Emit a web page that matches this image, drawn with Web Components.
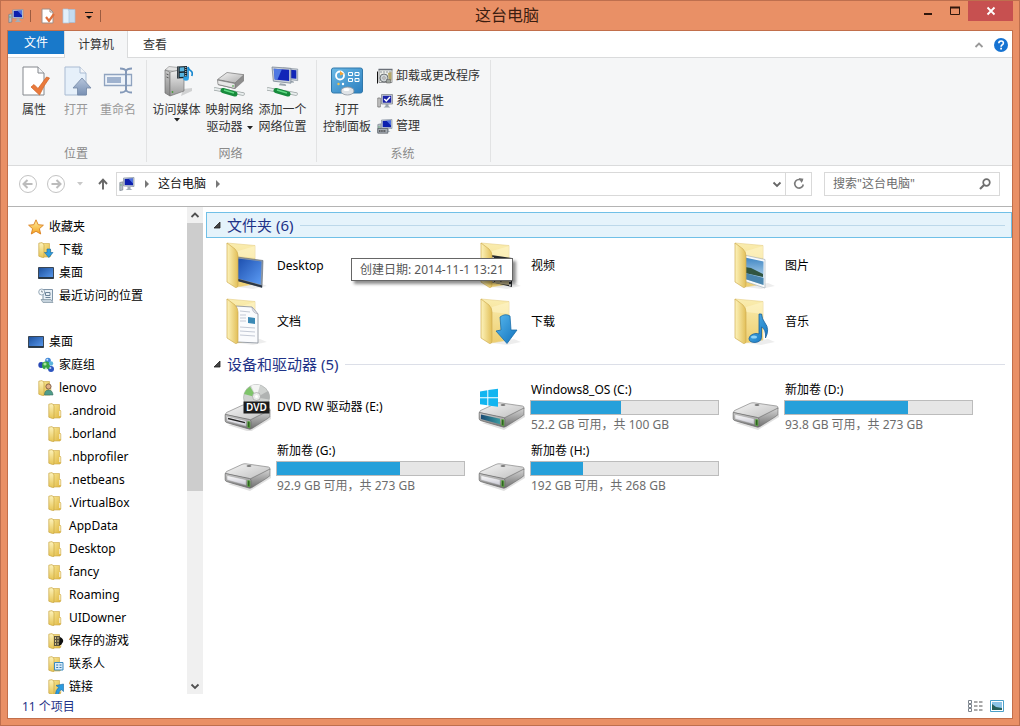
<!DOCTYPE html>
<html lang="zh-CN">
<head>
<meta charset="utf-8">
<title>这台电脑</title>
<style>
  html, body { height: 100%; margin: 0; }
  body {
    font: 12px/17px "Noto Sans", "Noto Sans CJK SC", sans-serif;
    color: #000; background: #e99066;
  }
</style>
</head>
<body>
<explorer-window>
  <title-bar slot="title">这台电脑</title-bar>
  <ribbon-tabs slot="tabs"></ribbon-tabs>
  <ribbon-bar slot="ribbon">
    <ribbon-group label="位置" style="--w:139px;--pad:5px">
      <ribbon-button icon="props" style="--w:42px">属性</ribbon-button>
      <ribbon-button icon="open" disabled style="--w:42px">打开</ribbon-button>
      <ribbon-button icon="rename" disabled style="--w:42px">重命名</ribbon-button>
    </ribbon-group>
    <ribbon-group label="网络" style="--w:170px;--pad:3px">
      <ribbon-button icon="media" drop="below" style="--w:53px">访问媒体</ribbon-button>
      <ribbon-button icon="mapdrive" drop="inline" style="--w:53px">映射网络<br>驱动器</ribbon-button>
      <ribbon-button icon="netplace" style="--w:53px">添加一个<br>网络位置</ribbon-button>
    </ribbon-group>
    <ribbon-group label="系统" style="--w:174px;--pad:4px">
      <ribbon-button icon="panel" style="--w:52px">打开<br>控制面板</ribbon-button>
      <ribbon-list>
        <ribbon-item icon="uninstall">卸载或更改程序</ribbon-item>
        <ribbon-item icon="sysprops">系统属性</ribbon-item>
        <ribbon-item icon="manage">管理</ribbon-item>
      </ribbon-list>
    </ribbon-group>
  </ribbon-bar>
  <address-bar slot="address" place="这台电脑"></address-bar>

  <nav-pane slot="nav">
    <tree-item icon="star">收藏夹</tree-item>
    <tree-item icon="fdown" level="1">下载</tree-item>
    <tree-item icon="desk" level="1">桌面</tree-item>
    <tree-item icon="recent" level="1">最近访问的位置</tree-item>
    <tree-item icon="desk" class="section">桌面</tree-item>
    <tree-item icon="home" level="1">家庭组</tree-item>
    <tree-item icon="fuser" level="1">lenovo</tree-item>
    <tree-item icon="folder" level="2">.android</tree-item>
    <tree-item icon="folder" level="2">.borland</tree-item>
    <tree-item icon="folder" level="2">.nbprofiler</tree-item>
    <tree-item icon="folder" level="2">.netbeans</tree-item>
    <tree-item icon="folder" level="2">.VirtualBox</tree-item>
    <tree-item icon="folder" level="2">AppData</tree-item>
    <tree-item icon="folder" level="2">Desktop</tree-item>
    <tree-item icon="folder" level="2">fancy</tree-item>
    <tree-item icon="folder" level="2">Roaming</tree-item>
    <tree-item icon="folder" level="2">UIDowner</tree-item>
    <tree-item icon="fgame" level="2">保存的游戏</tree-item>
    <tree-item icon="fcontact" level="2">联系人</tree-item>
    <tree-item icon="flink" level="2">链接</tree-item>
  </nav-pane>

  <file-group slot="files" label="文件夹 (6)" active style="--row:56px">
    <file-tile icon="bigdesktop" tip="创建日期: 2014-11-1 13:21">Desktop</file-tile>
    <file-tile icon="bigvideo">视频</file-tile>
    <file-tile icon="bigpicture">图片</file-tile>
    <file-tile icon="bigdocs">文档</file-tile>
    <file-tile icon="bigdown">下载</file-tile>
    <file-tile icon="bigmusic">音乐</file-tile>
  </file-group>
  <file-group slot="files" label="设备和驱动器 (5)" style="--row:61px">
    <file-tile icon="dvd">DVD RW 驱动器 (E:)</file-tile>
    <drive-tile icon="driveos" used="48" info="52.2 GB 可用，共 100 GB">Windows8_OS (C:)</drive-tile>
    <drive-tile icon="drive" used="66" info="93.8 GB 可用，共 273 GB">新加卷 (D:)</drive-tile>
    <drive-tile icon="drive" used="66" info="92.9 GB 可用，共 273 GB">新加卷 (G:)</drive-tile>
    <drive-tile icon="drive" used="28" info="192 GB 可用，共 268 GB">新加卷 (H:)</drive-tile>
  </file-group>
  <status-bar slot="status">11 个项目</status-bar>
</explorer-window>

<script>
/* ---------- icon drawings ---------- */
const grad = (id, a, b, x2 = 0, y2 = 1) =>
  `<linearGradient id="${id}" x1="0" y1="0" x2="${x2}" y2="${y2}"><stop offset="0" stop-color="${a}"/><stop offset="1" stop-color="${b}"/></linearGradient>`;

const folder16 = `<defs>${grad('f', '#f7e48f', '#dfb640', 1, 1)}${grad('g', '#fdf3bd', '#e6c555')}</defs>
  <path d="M5 1.500h6.500v5l1.300 1.500V14L12 15H5z" fill="url(#f)" stroke="#cda845" stroke-width=".6"/>
  <path d="M11 8h1.500v5H11z" fill="#fff" opacity=".6"/>
  <path d="M.8 1.200L4 .6 6 2.500v12.800L4.500 15.500.8 14.200z" fill="url(#g)" stroke="#c9a644" stroke-width=".7"/>`;

const bigFolder = (inner) => `<defs>${grad('bf', '#faedb0', '#edce70')}${grad('bg', '#fdf3bb', '#e2bf58', 1, 0)}${grad('scr', '#1d4fae', '#5c9cf5', 1, 1)}${grad('arr', '#57b8ee', '#1272bd', 1, 1)}${grad('pic', '#3f86c4', '#d5ebf6')}</defs>
  <path d="M14 46l22-4 7 3-14 3z" fill="#000" opacity=".07"/>
  <path d="M3 2L31 4.500V43l-18 3z" fill="url(#bf)" stroke="#e6cf86" stroke-width=".6"/>
  <path d="M14 10l17-5v12l-17-2z" fill="#fff8cf" opacity=".5"/>
  ${inner}
  <path d="M3 2l8 6q3 3 3 7v28q0 4-2.500 3.500L3 41z" fill="url(#bg)" stroke="#d0ae52" stroke-width=".7"/>`;

const driveBody = (dy, face) => `<defs>${grad('dt', '#f6f6f6', '#bdbdbd', 1, 1)}${grad('df', '#fbfbfb', '#c9c9d4')}${grad('dr', '#d5d5d5', '#6f6f6f')}${grad('dos', '#1a4b74', '#3a9aa0', 1, 0)}</defs>
  <g transform="translate(0 ${dy})">
  <path d="M4 39l22 7 21-13v-3z" fill="#000" opacity=".12"/>
  <path d="M1.500 28.500Q1.500 27 3 26.300L18 19.400Q20 18.500 22 18.800L44.500 22Q46.500 22.500 46 24.500L27 34.500z" fill="url(#dt)" stroke="#858585" stroke-width=".7"/>
  <path d="M46 24v5.500Q46 31 44.500 32L28 42.500Q26 43.500 25 42.800L26 34z" fill="url(#dr)" stroke="#6a6a6a" stroke-width=".6"/>
  <path d="M1.200 28.500L25.500 33.500Q27 34 27 35.500V41.500Q27 43.500 25 43L2.500 36.500Q1.200 36 1.200 34.500z" fill="url(#dr)" stroke="#6e6e6e" stroke-width=".8"/>
  ${face}
  <path d="M23.800 35.500l2 .4v5.800l-2-.5z" fill="#204a18" stroke="#5cb13c" stroke-width=".8"/>
  <ellipse cx="25" cy="21" rx="2.500" ry=".8" fill="#555"/></g>`;
const plainFace = `<path d="M3 30.500l19 4.200v5.500L3 35z" fill="url(#df)" stroke="#999" stroke-width=".4"/>`;

const monitor = (x, y, s = 1) => `<g transform="translate(${x} ${y}) scale(${s})"><path d="M0 0l14 1v11L1 10.500z" fill="#c9d0d8" stroke="#7c8794" stroke-width=".6"/><path d="M1.300 1.300l11.400.8v8.200L2 9.200z" fill="#1226b8"/><path d="M1.300 1.300l6 .4L4 9.400 2 9.200z" fill="#5f8dec" opacity=".8"/><path d="M6 12l4 .5.5 1.500L5 13.500z" fill="#9aa4ad"/></g>`;
const netPipe = (y) => `<g transform="translate(0 ${y})"><path d="M1 1l28 5" stroke="#9ba3a3" stroke-width="3.500" stroke-linecap="round"/><path d="M1 1l28 5" stroke="#e9eeee" stroke-width="2" stroke-linecap="round"/><path d="M9 2.500l12 3.500" stroke="#178a3c" stroke-width="5" stroke-linecap="round"/><path d="M10 2l10 3" stroke="#5fd883" stroke-width="1.500"/></g>`;
const page = (fill, stroke) => `<path d="M5 2h15l6 6v22H5z" fill="${fill}" stroke="${stroke}"/><path d="M20 2v6h6" fill="#f3f5f8" stroke="${stroke}"/>`;

const pc = `<path d="M.8 6.500l3-.7V14l-3 .6z" fill="#b6bec8" stroke="#6d7883" stroke-width=".6"/><path d="M1.500 9h1" stroke="#2fa83c"/><path d="M4.500 2L15 1.500v9L4.500 10z" fill="#c6ced8" stroke="#8590a0" stroke-width=".7"/><path d="M5.700 3L14 2.600v6.600l-8.300-.3z" fill="#0c1fae"/><path d="M9.500 2.800L14 2.600v5z" fill="#5f86ec" opacity=".8"/><path d="M8.500 10.500h3v2.300l2 1.200H6.500l2-1.200z" fill="#a3adb8"/>`;

const ICONS = {
  pc: [16, pc],
  pageSmall: [16, `<path d="M2 1h8l3 3v11H2z" fill="#fff" stroke="#a08d85"/><path d="M10 1v3h3" fill="none" stroke="#a08d85"/><path d="M6 9l3 4 5-7" fill="none" stroke="#e0703c" stroke-width="2.200"/>`],
  newFolder: [16, `<path d="M6 1.500h7v13H6z" fill="#c4dcf0" stroke="#a3bfd8" stroke-width=".7"/><path d="M1 1h5l1 2v12H1z" fill="#e2eff9" stroke="#a9c4dc" stroke-width=".7"/>`],
  caretBar: [8, `<path d="M0 .5h8" stroke="#111"/><path d="M1 4h6L4 7z" fill="#111"/>`],
  caret: [6, `<path d="M0 1h6L3 4.500z" fill="currentColor"/>`],
  min: [10, `<path d="M1 8h8" stroke="#30170c" stroke-width="2"/>`],
  max: [10, `<path d="M.500 1.500h9v7h-9z" fill="none" stroke="#30170c"/><path d="M0 1.500h10" stroke="#30170c" stroke-width="2"/>`],
  close: [10, `<path d="M1.500 1.500l7 7m0-7l-7 7" stroke="#fff" stroke-width="1.800"/>`],
  up: [10, `<path d="M1.500 7L5 3.500 8.500 7" fill="none" stroke="currentColor" stroke-width="1.800"/>`],
  down: [10, `<path d="M1.500 3.500L5 7l3.500-3.500" fill="none" stroke="currentColor" stroke-width="1.800"/>`],
  tri: [8, `<path d="M2 0v8l4-4z" fill="#777"/>`],
  corner: [8, `<path d="M7 1v6H1z" fill="#444" stroke="#222" stroke-width=".8"/>`],
  back: [20, `<circle cx="10" cy="10" r="8.500" fill="none" stroke="#c3c3c3"/><path d="M5.500 10h9M9.500 6l-4 4 4 4" fill="none" stroke="#bcbcbc" stroke-width="2"/>`],
  fwd: [20, `<circle cx="10" cy="10" r="8.500" fill="none" stroke="#c3c3c3"/><path d="M5.500 10h9m-4-4l4 4-4 4" fill="none" stroke="#bcbcbc" stroke-width="2"/>`],
  upArrow: [12, `<path d="M6 11.500V2M2 6l4-4.300L10 6" fill="none" stroke="#666" stroke-width="1.900"/>`],
  refresh: [12, `<path d="M9.500 3.200A4.300 4.300 0 1 0 10.300 6.500" fill="none" stroke="#7b7b7b" stroke-width="1.600"/><path d="M5.800 0h0L10.500.8 8.500 5z" fill="#7b7b7b"/>`],
  search: [12, `<circle cx="7.500" cy="4.500" r="3.300" fill="none" stroke="#6e6e6e" stroke-width="1.700"/><path d="M5 7l-4 4" stroke="#6e6e6e" stroke-width="2.200"/>`],
  help: [14, `<circle cx="7" cy="7" r="7" fill="#1673d2"/><path d="M4.800 5.300Q4.800 3 7.100 3t2.300 2.100Q9.400 6.300 8 7 7.100 7.500 7.100 8.700" fill="none" stroke="#fff" stroke-width="1.600"/><path d="M6.200 9.800h1.800v1.700H6.200z" fill="#fff"/>`],

  props: [32, page('#fff', '#84888d') + `<path d="M13 22l3-2.500 4 4L28.500 12l3 1Q26 20 21.500 30z" fill="#ea7a3c" stroke="#cf6124" stroke-width=".7"/>`],
  open: [32, `<defs>${grad('a', '#b7c6dc', '#7890b3')}</defs>` + page('#e6f0fa', '#a9bbd2') + `<path d="M22 13l9 10h-4.500v7h-9v-7H13z" fill="url(#a)" stroke="#7488a6" stroke-width=".8"/>`],
  rename: [32, `<path d="M2.500 9.500h27v11h-27z" fill="#eef3f9" stroke="#8fa3bf" stroke-width="1.300"/><path d="M5 12h14v6H5z" fill="#9fb2ce"/><path d="M18 3.500q5 0 6 2.500 1-2.500 6-2.500M24 6v19M18 27.500q5 0 6-2.500 1 2.500 6 2.500" fill="none" stroke="#8499b8" stroke-width="2"/>`],
  media: [32, `<defs>${grad('a', '#f2f2f2', '#9b9b9b', 0, 1)}${grad('b', '#c9c9c9', '#8a8a8a')}</defs><path d="M20 31l11-5v-3l-9 1z" fill="#000" opacity=".15"/><path d="M4 5l4-3.500L22 3l-4 4z" fill="#e4e4e4" stroke="#888" stroke-width=".6"/><path d="M4 5l5 2v24l-5-3z" fill="url(#b)" stroke="#6e6e6e" stroke-width=".7"/><path d="M9 7l14-3v22L9 31z" fill="url(#a)" stroke="#777" stroke-width=".7"/><path d="M5.500 9l2 .8M5.500 12l2 .8" stroke="#555"/><circle cx="11.500" cy="27" r=".9" fill="#4b9b3a"/><path d="M16 1.500l10-.5v12l-10 .5z" fill="#16232c"/><path d="M18.700 2.500l4.600-.2v4l-4.600.2zM18.700 8l4.600-.2v4l-4.600.2z" fill="#58b4df"/><path d="M17.200 2.500V13M24.800 2v10.500" stroke="#ddd" stroke-dasharray="1 1"/><path d="M27 13V2q1 3 3 4t.8 5" fill="none" stroke="#1586cf" stroke-width="1.600"/><ellipse cx="25" cy="13.500" rx="2.800" ry="2.200" fill="#2ba0e4"/>`],
  mapdrive: [32, `<defs>${grad('a', '#f7f7f7', '#aaa', 1, 1)}</defs><path d="M4 15L13 8l17 2v6L21 24 4 20z" fill="#8d8d8d"/><path d="M3.500 14.500L13 7.500l17 2.200L21 18z" fill="url(#a)" stroke="#777" stroke-width=".7"/><path d="M3.500 15L21 18.500v5L4 19.500z" fill="#e7e7e7" stroke="#777" stroke-width=".7"/><path d="M19 20v2" stroke="#3fa33a"/>` + netPipe(23)],
  netplace: [32, monitor(16, 3, 1.050) + monitor(5, 2, 1.350) + netPipe(23)],
  panel: [32, `<defs>${grad('a', '#6bb9e6', '#2b7fbf', 1, 1)}</defs><rect x="0.500" y="3" width="31" height="25" rx="2" fill="url(#a)" stroke="#3178ab"/><circle cx="9" cy="10.500" r="4" fill="none" stroke="#fff" stroke-width="1.800"/><path d="M9 10.500V6l4 3z" fill="#f3a53a"/><path d="M17.500 7.500h4v3h-4zM24 7.500h4v3h-4zM17.500 13.500h4v3h-4zM24 13.500h4v3h-4z" fill="#4f9fd2" stroke="#fff"/><circle cx="7.500" cy="19" r="1.200" fill="#f6c14a"/><circle cx="12" cy="19" r="1.200" fill="#fff"/><ellipse cx="16.500" cy="26" rx="6.500" ry="4" fill="#dfe3e7" stroke="#8e979f" stroke-width=".8"/><ellipse cx="15.500" cy="24.500" rx="3" ry="1.500" fill="#fff"/>`],
  uninstall: [16, `<path d="M2 1.500h13v13H2z" fill="#e9ebe6" stroke="#7d8084" stroke-width=".8"/><path d="M1.500 1.500h14" stroke="#6b7078" stroke-width="1.500"/><path d="M.5 3.500v12" stroke="#111"/><path d="M3 4h11" stroke="#8f959b" stroke-dasharray="2 1"/><circle cx="7" cy="10" r="4" fill="#cfd4d6" stroke="#6f7477"/><circle cx="7" cy="10" r="1.200" fill="#fff" stroke="#666" stroke-width=".6"/><path d="M11 5l3.500-1v8L12 14z" fill="#b6a86a"/><path d="M9.500 11.500h4v3.500h-4z" fill="#9da39d" stroke="#666" stroke-width=".6"/>`],
  sysprops: [16, `<path d="M.8 5h2.500v9H.8z" fill="#ccc" stroke="#666" stroke-width=".7"/><path d="M4.500 1.500h11v9.500h-11z" fill="#c9ced5" stroke="#848a92" stroke-width=".8"/><path d="M5.800 2.800h8.400v6.900H5.800z" fill="#1a22a8"/><path d="M7.300 6l2 2 3.700-4" fill="none" stroke="#fff" stroke-width="1.500"/><path d="M8.500 11h3v2l2 1.500h-7l2-1.500z" fill="#9aa3ad"/>`],
  manage: [16, pc + `<path d="M.8 10.500h10v4.700h-10z" fill="#a6adb4" stroke="#50565c" stroke-width=".7"/><path d="M2 13h7" stroke="#444" stroke-width="1.500" stroke-dasharray="1.500 .7"/>`],

  star: [16, `<defs>${grad('a', '#fff0a0', '#f4a321')}</defs><path d="M8 .8l2.200 4.900 5.200.5-4 3.500 1.300 5.300L8 12.300 3.300 15l1.300-5.300-4-3.500 5.200-.5z" fill="url(#a)" stroke="#d97f1f" stroke-width=".9"/>`],
  folder: [16, folder16],
  fdown: [16, folder16 + `<path d="M9 7h3.500v3.500H15L10.800 15.500 6.500 10.500H9z" fill="#2f9ddf" stroke="#1368a4" stroke-width=".6"/>`],
  fuser: [16, folder16 + `<circle cx="10.500" cy="6.500" r="2.600" fill="#e0ae84" stroke="#6f4d35" stroke-width=".8"/><path d="M6.500 15q0-5 4-5t4.500 5z" fill="#4f9c8a" stroke="#39705f" stroke-width=".6"/>`],
  fgame: [16, folder16 + `<path d="M6 3h6v10H6z" fill="#5b533e"/><path d="M7.500 4v8M10 4v8" stroke="#d8c88a" stroke-dasharray="2 1"/><path d="M12 4q4 2 3 5l-2 3h-2z" fill="#111"/>`],
  fcontact: [16, folder16 + `<path d="M6.500 6.500h8.500V14H6.500z" fill="#d9ecf9" stroke="#3a8bc2"/><path d="M8.200 9h2M8.200 11.500h2M11.500 9h2M11.500 11.500h2" stroke="#3a79ac"/>`],
  flink: [16, folder16 + `<path d="M8 6.500L15.500 5v7.500l-2.300-2Q11 12 10.500 15.500H7.500Q7.500 11 10.800 8.500z" fill="#2a9be0" stroke="#1a6aa5" stroke-width=".6"/>`],
  desk: [16, `<defs>${grad('a', '#1b4f9c', '#5b9cf0', 1, 1)}</defs><path d="M.5 2.500h15v11H.5z" fill="url(#a)" stroke="#3b4754"/><path d="M.5 12.800h15" stroke="#26333f" stroke-width="1.500"/>`],
  recent: [16, `<path d="M5 1.500h9.500v11H5z" fill="#e8eff5" stroke="#8095a8"/><path d="M7.500 4.500h4.500v3H7.500zM7.500 9.500h5" fill="none" stroke="#6b8298"/><path d="M3 11.500h10l2 3H5z" fill="#c5d2dc" stroke="#7d909f" stroke-width=".7"/><circle cx="3.700" cy="4" r="3" fill="#f4f8fb" stroke="#8095a8" stroke-width=".8"/><path d="M3.700 2.500V4H5" fill="none" stroke="#567" stroke-width=".7"/>`],
  home: [16, `<circle cx="10" cy="3.500" r="2.800" fill="#3f86d8"/><circle cx="3.200" cy="8" r="2.900" fill="#2747b4"/><circle cx="13" cy="12" r="3" fill="#2d55bf"/><circle cx="8" cy="8.500" r="4" fill="#36a344"/><circle cx="13" cy="6.500" r="2.200" fill="#5cb4dd"/><circle cx="7" cy="7" r="1.600" fill="#a9e59d"/><circle cx="9.300" cy="2.700" r="1" fill="#cbe3fa"/><circle cx="12.300" cy="11" r="1.100" fill="#b7cdf6"/><path d="M5.500 13.500L8 10l2.500 3.500z" fill="#fff" opacity=".7"/>`],

  bigdesktop: [48, bigFolder(`<path d="M13 16l26 3.500-1 27L13 39z" fill="#8d98a6" stroke="#5d6875" stroke-width=".6"/><path d="M14 17.500l23.500 3-.8 23L14 37.500z" fill="url(#scr)"/><path d="M13 37.500l25 7v2L13 40z" fill="#2c3745"/>`)],
  bigvideo: [48, bigFolder(`<path d="M13 14l21 3v29l-21-5z" fill="#26292c"/><path d="M17 18l13 2v6l-13-2z" fill="#8aa3ad"/><path d="M17 31l13 3v7l-13-3z" fill="#7795a5"/><path d="M15 42l5-4 3 3 4-5 4 3v5z" fill="#b9ad85"/><path d="M21 36l5-2 3 3-3 3z" fill="#d9c9a0"/><path d="M15 16v25M32 19v26" stroke="#e5e5e5" stroke-width="1.500" stroke-dasharray="2 2"/>`)],
  bigpicture: [48, bigFolder(`<path d="M12 14l21 4.500V47l-21-7z" fill="#f8fafb" stroke="#9eabb5" stroke-width=".6"/><path d="M13 16.500l18.500 4V44L13 38z" fill="url(#pic)"/><path d="M13 26l6 1 12 6v3l-18-4z" fill="#31553f"/><path d="M13 32l18.500 5v7L13 38z" fill="#4a86ae"/>`)],
  bigdocs: [48, bigFolder(`<path d="M12 9l16 1 6 7v29l-21-1z" fill="#fafbfd" stroke="#858d98" stroke-width=".8"/><path d="M28 10q0 6 6 7z" fill="#e1e5ea" stroke="#99a" stroke-width=".5"/><path d="M16 14l10 1M16 18h6M16 21h6M16 24h6M16 30l15 1M16 34l15 1M16 38l15 1" stroke="#c3c9d5"/><path d="M24 20l7 1v6l-7-1z" fill="#3b89b5"/>`)],
  bigdown: [48, bigFolder('') + `<path d="M22 20q5-4 10-1l1 14 6 0-10 13.500L18 34l5-1z" fill="url(#arr)" stroke="#1a6eaa" stroke-width=".8"/>`],
  bigmusic: [48, bigFolder('') + `<path d="M27 17h2.500Q30 22 33 26q5 6 .5 15Q34 32 29.500 30v10.500Q29 45 23 45.500 17 45.500 17 41.500 18 37 24 36.500q2 0 3 .5z" fill="url(#arr)" stroke="#185f9b" stroke-width=".8"/><ellipse cx="22" cy="40" rx="3" ry="1.600" fill="#8fd3f7"/>`],
  drive: [48, driveBody(0, plainFace)],
  driveos: [48, driveBody(0, `<path d="M3 30.500l19 4.200v5.500L3 35z" fill="url(#dos)"/>`) + `<path d="M2 7.500l7.300-1.200v7H2zM10.300 6.100L20 4.700v8.600h-9.700zM2 14.300h7.300v7L2 20.200zM10.300 14.300H20v8.500l-9.700-1.400z" fill="#12b5f0"/>`],
  dvd: [48, driveBody(3, `<path d="M3 30.500l19 4.200v5.500L3 35z" fill="url(#df)" stroke="#999" stroke-width=".4"/><path d="M4 32.500l17 4.200" stroke="#222" stroke-width="1.300"/>`) + `<circle cx="32.500" cy="14.500" r="13" fill="#cfd2d0" stroke="#a5a8a6" stroke-width=".6"/><path d="M32.500 14.500L20 11q2-5 6-7.500z" fill="#7ec46a"/><path d="M32.500 14.500L27 2.600q4-1.500 9-.6z" fill="#f3f4f3"/><path d="M32.500 14.500L44 8q2.500 4 1.400 8.500z" fill="#b0b3b2"/><circle cx="32.500" cy="13.500" r="4" fill="#e9ebea" stroke="#999" stroke-width=".6"/><circle cx="32.500" cy="13.500" r="1.500" fill="#fff"/><path d="M19.500 18.500h26v12h-26z" fill="#1c1c1c"/><text x="32.500" y="28" text-anchor="middle" fill="#fff" font-family="Noto Sans, sans-serif" font-size="10" font-weight="600">DVD</text>`],
  details: [16, `<path d="M1.500 2.500h3v3h-3zM1.500 6.500h3v3h-3zM1.500 10.500h3v3h-3z" fill="#fff" stroke="#7b838c"/><path d="M7 4h3.500M12 4h3.500M7 8h3.500M12 8h3.500M7 12h3.500M12 12h3.500" stroke="#555"/>`],
  thumbs: [16, `<path d="M1.500 2.500h13v11h-13z" fill="#fff" stroke="#4ca0c8"/><path d="M3 4h10v8H3z" fill="#8cc3e6"/><path d="M3 6l4 3 6 1v2H3z" fill="#275f5a"/>`]
};

/* ---------- component helper ---------- */
function define(name, css, view) {
  customElements.define(name, class extends HTMLElement {
    connectedCallback() {
      if (this.shadowRoot) return;
      this.attachShadow({ mode: 'open' }).innerHTML =
        `<style>:host{display:block}*{box-sizing:border-box}
         button,input{font:inherit;color:inherit;margin:0;padding:0;border:0;background:none}
         a{color:inherit;text-decoration:none}${css}</style>${view(this)}`;
    }
  });
}
const attr = (el, n, d = '') => el.getAttribute(n) ?? d;

define('pc-icon', `:host{display:block;flex:none}svg{display:block}`, el => {
  const [size, art] = ICONS[attr(el, 'name')];
  return `<svg width="${size}" height="${size}" viewBox="0 0 ${size} ${size}" aria-hidden="true">${art}</svg>`;
});

define('explorer-window', `
  :host{box-sizing:border-box;height:100vh;display:flex;flex-direction:column;background:#e99066;border:1px solid #be6f4e;padding:0 6px 6px}
  .client{flex:1;min-height:0;display:flex;flex-direction:column;background:#fff;border:1px solid #c26f4b;}
  .body{flex:1;min-height:0;display:flex}
  main{flex:1;min-width:0;padding-top:5px}
  ::slotted([slot=nav]){width:198px;flex:none}`, () => `
  <slot name="title"></slot>
  <div class="client">
    <slot name="tabs"></slot><slot name="ribbon"></slot><slot name="address"></slot>
    <div class="body"><slot name="nav"></slot><main><slot name="files"></slot></main></div>
    <slot name="status"></slot>
  </div>`);

define('title-bar', `
  :host{height:29px;flex:none;display:grid;grid-template-columns:1fr auto 1fr}
  .tools{display:flex;align-items:center;gap:6px;padding-left:1px}
  .tools i{width:1px;height:12px;background:#9c5b40}
  .tools i:first-of-type{margin-right:3px}
  .tools button,.win button{display:flex;align-items:center;justify-content:center}
  .caret{width:10px;height:16px}
  h1{margin:0;padding-right:6px;font-size:16px;line-height:28px;font-weight:400;color:#3b1d10}
  .win{display:flex;justify-content:flex-end}
  .win button{width:27px;height:20px}
  .win .close{width:45px;background:#c75050}`, () => `
  <div class="tools"><pc-icon name="pc"></pc-icon><i></i>
    <button aria-label="属性"><pc-icon name="pageSmall"></pc-icon></button>
    <button aria-label="新建文件夹"><pc-icon name="newFolder"></pc-icon></button>
    <button class="caret" aria-label="自定义快速访问工具栏"><pc-icon name="caretBar"></pc-icon></button><i></i></div>
  <h1><slot></slot></h1>
  <div class="win"><button aria-label="最小化"><pc-icon name="min"></pc-icon></button>
    <button aria-label="最大化"><pc-icon name="max"></pc-icon></button>
    <button class="close" aria-label="关闭"><pc-icon name="close"></pc-icon></button></div>`);

define('ribbon-tabs', `
  :host{display:flex;height:27px;flex:none;box-shadow:inset 0 -1px #dadbdc;color:#333}
  button{height:27px;text-align:center}
  .file{width:56px;height:23px;background:#1979ca;color:#fff}
  .on{width:64px;background:#f5f6f7;border:1px solid #dadbdc;border-top:0;border-bottom:0}
  .view{width:54px}
  .end{margin-left:auto;display:flex;align-items:center;gap:10px;padding-right:4px;color:#999}
  .end button{height:auto}`, () => `
  <button class="file">文件</button><button class="on">计算机</button><button class="view">查看</button>
  <div class="end"><button aria-label="最小化功能区"><pc-icon name="up"></pc-icon></button>
  <button aria-label="帮助"><pc-icon name="help"></pc-icon></button></div>`);

define('ribbon-bar', `:host{display:flex;flex:none;height:108px;box-sizing:border-box;background:#f5f6f7;border-bottom:1px solid #dadbdc;padding:2px 0 3px}`,
  () => `<slot></slot>`);

define('ribbon-group', `
  :host{display:flex;flex-direction:column;box-sizing:border-box;width:var(--w);border-right:1px solid #e2e3e4}
  .items{flex:1;display:flex;padding:4px 0 0 var(--pad)}
  .label{text-align:center;color:#8a8a8a;line-height:17px;padding-right:2px}`,
  el => `<div class="items"><slot></slot></div><div class="label">${attr(el, 'label')}</div>`);

define('ribbon-button', `
  :host{width:var(--w);color:#333}
  :host([disabled]){color:#999}
  button{width:100%;display:flex;flex-direction:column;align-items:center;gap:4px;padding-top:1px;white-space:nowrap;line-height:17px}
  .below{margin-top:-5px;height:6px;color:#222}
  .inline{display:inline-block;margin-left:4px;vertical-align:middle;color:#222}`, el => {
  const drop = attr(el, 'drop');
  return `<button ${el.hasAttribute('disabled') ? 'disabled' : ''}><pc-icon name="${attr(el, 'icon')}"></pc-icon>
    <span><slot></slot>${drop === 'inline' ? '<pc-icon class="inline" name="caret"></pc-icon>' : ''}</span>
    ${drop === 'below' ? '<pc-icon class="below" name="caret"></pc-icon>' : ''}</button>`;
});
define('ribbon-list', `:host{margin-left:4px}`, () => `<slot></slot>`);
define('ribbon-item', `button{display:flex;align-items:center;gap:3px;height:25px;padding-bottom:2px;color:#333;white-space:nowrap}`,
  el => `<button><pc-icon name="${attr(el, 'icon')}"></pc-icon><slot></slot></button>`);

define('address-bar', `
  :host{display:flex;align-items:center;flex:none;height:41px;box-sizing:border-box;padding:0 12px 5px 10px;border-bottom:1px solid #b4b4b4}
  button{display:flex;align-items:center;justify-content:center;height:20px;color:#666}
  .fwd{margin-left:8px}.hist{width:28px;color:#c8c8c8}.upb{width:18px;margin-right:4px}
  .box{flex:1;display:flex;align-items:center;height:24px;border:1px solid #d9d9d9;padding-left:2px}
  .box button{height:22px}
  .box .sep{width:23px}.box .crumb{color:#111}
  .box .drop{width:16px;margin-left:auto}
  .box .re{width:26px;border-left:1px solid #d9d9d9}
  .search{display:flex;align-items:center;width:176px;height:24px;margin-left:12px;border:1px solid #d9d9d9;padding:0 8px}
  input{flex:1;min-width:0;outline:0;height:20px}
  input::placeholder{color:#6d6d6d;opacity:1}`, el => `
  <button aria-label="后退"><pc-icon name="back"></pc-icon></button>
  <button class="fwd" aria-label="前进"><pc-icon name="fwd"></pc-icon></button>
  <button class="hist" aria-label="最近浏览的位置"><pc-icon name="caret"></pc-icon></button>
  <button class="upb" aria-label="向上"><pc-icon name="upArrow"></pc-icon></button>
  <div class="box"><pc-icon name="pc"></pc-icon>
    <button class="sep" aria-label="展开"><pc-icon name="tri"></pc-icon></button>
    <button class="crumb">${attr(el, 'place')}</button>
    <button class="sep" aria-label="展开"><pc-icon name="tri"></pc-icon></button>
    <button class="drop" aria-label="以前的位置"><pc-icon name="down"></pc-icon></button>
    <button class="re" aria-label="刷新"><pc-icon name="refresh"></pc-icon></button></div>
  <label class="search"><input type="text" aria-label="搜索" placeholder='搜索"${attr(el, 'place')}"'><pc-icon name="search"></pc-icon></label>`);

define('nav-pane', `
  :host{display:flex;min-height:0}
  nav{flex:1;min-width:0;overflow:hidden;padding:8px 0 0 20px}
  .bar{width:16px;margin-right:3px;background:#f0f0f0;display:flex;flex-direction:column;align-items:center;color:#505050}
  .bar button{height:16px;display:flex;align-items:center;flex:none}
  .track{flex:1;width:100%}.thumb{height:59%;background:#cdcdcd}`, () => `
  <nav><slot></slot></nav>
  <div class="bar"><button aria-label="向上滚动"><pc-icon name="up"></pc-icon></button>
  <div class="track"><div class="thumb"></div></div>
  <button aria-label="向下滚动"><pc-icon name="down"></pc-icon></button></div>`);

define('tree-item', `
  :host([level="1"]){padding-left:10px}:host([level="2"]){padding-left:20px}
  :host(.section){margin-top:23px}
  a{display:flex;align-items:center;gap:5px;height:23px;white-space:nowrap}`,
  el => `<a href="#"><pc-icon name="${attr(el, 'icon')}"></pc-icon><slot></slot></a>`);

define('file-group', `
  :host(:not([active])){margin-top:1px}
  header{display:flex;align-items:center;height:26px;padding:0 6px;border:1px solid transparent;color:#1e3287}
  :host([active]) header{background:#e5f3fb;border-color:#70c0e7}
  button{display:flex;align-items:center;gap:6px;font-size:15px;line-height:22px}
  hr{flex:1;margin:0 0 0 7px;border:0;border-top:1px solid #dcdfe8}
  :host([active]) hr{border-color:#bcd8ea}
  .grid{display:grid;grid-template-columns:repeat(auto-fill,254px);grid-auto-rows:var(--row);padding-left:18px}`,
  el => `<header><button><pc-icon name="corner"></pc-icon>${attr(el, 'label')}</button><hr></header><div class="grid"><slot></slot></div>`);

define('file-tile', `
  :host{position:relative}
  a{display:flex;align-items:center;gap:5px;height:100%;padding-bottom:2px}
  .tip{position:absolute;z-index:2;left:127px;top:20px;padding:1px 8px;border:1px solid #666;background:#fff;color:#575757;line-height:19px;white-space:nowrap;box-shadow:3px 3px 3px rgba(0,0,0,.45)}`,
  el => `<a href="#"><pc-icon name="${attr(el, 'icon')}"></pc-icon><span><slot></slot></span></a>${el.hasAttribute('tip') ? `<div class="tip" role="tooltip">${attr(el, 'tip')}</div>` : ''}`);

define('drive-tile', `
  a{display:flex;align-items:center;gap:4px;height:100%;line-height:20px}
  .name,.info{padding-left:1px}
  .bar{width:189px;height:15px;background:#e6e6e6;border:1px solid #bcbcbc}
  .fill{height:100%;background:#26a0da}
  .info{color:#6d6d6d}`,
  el => `<a href="#"><pc-icon name="${attr(el, 'icon')}"></pc-icon><div><div class="name"><slot></slot></div>
    <div class="bar" role="meter" aria-label="已用空间" aria-valuemin="0" aria-valuemax="100" aria-valuenow="${attr(el, 'used')}"><div class="fill" style="width:${attr(el, 'used')}%"></div></div>
    <div class="info">${attr(el, 'info')}</div></div></a>`);

define('status-bar', `
  :host{display:flex;align-items:center;flex:none;height:24px;padding:0 7px 0 14px;color:#1e3287}
  span{flex:1}.views{display:flex;gap:6px}`, () => `
  <span><slot></slot></span><div class="views"><button aria-label="详细信息"><pc-icon name="details"></pc-icon></button>
  <button aria-label="大图标"><pc-icon name="thumbs"></pc-icon></button></div>`);
</script>
</body>
</html>
